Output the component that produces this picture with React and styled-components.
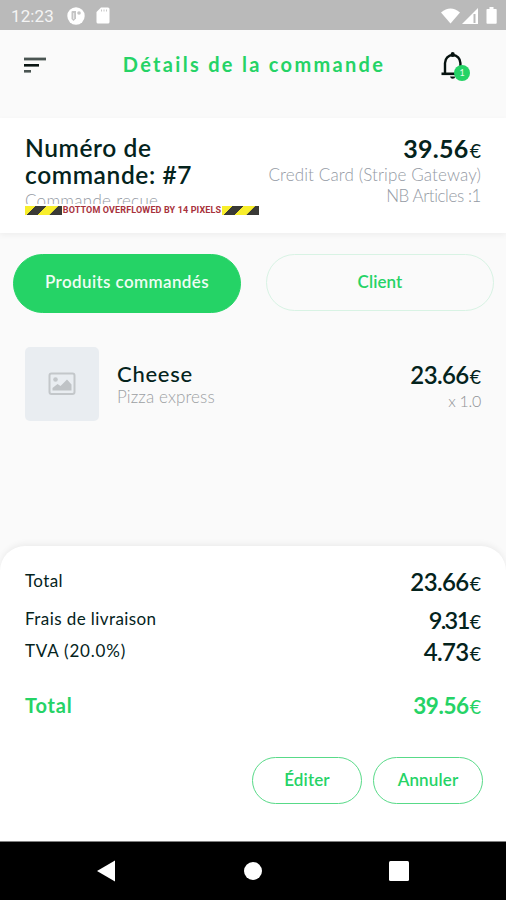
import React from "react";
import styled, { createGlobalStyle } from "styled-components";

const GREEN = "#25d366";
const INK = "#04231c";
const MUTED = "#949aa4";

const GlobalStyle = createGlobalStyle`
  * { box-sizing: border-box; }
  body { margin: 0; background: #fafafa; }
  button { font: inherit; padding: 0; border: 0; background: none; }
`;

const Screen = styled.div`
  width: 506px;
  height: 900px;
  display: flex;
  flex-direction: column;
  overflow: hidden;
  background: #fafafa;
  color: ${INK};
  font-family: Lato, "Liberation Sans", sans-serif;
  white-space: nowrap;
`;

const StatusBar = styled.div`
  flex: 0 0 30px;
  display: flex;
  align-items: center;
  justify-content: space-between;
  padding: 1px 8px 0 11px;
  background: #bababa;
  color: #fff;
`;

const Clock = styled.span`
  width: 56px;
  font: 400 17px/28px Roboto, sans-serif;
  letter-spacing: 0.1px;
  color: #f4f4f4;
`;

const StatusGroup = styled.div`
  display: flex;
  align-items: center;
  gap: ${(p) => p.$gap}px;
  svg { display: block; }
`;

const AppBar = styled.header`
  flex: 0 0 88px;
  display: grid;
  grid-template-columns: 100px 1fr 100px;
  align-items: start;
  padding-top: 19px;
`;

const MenuButton = styled.button`
  height: 31px;
  padding-left: 23px;
  svg { display: block; }
`;

const Title = styled.h1`
  margin: 0;
  padding-left: 2px;
  text-align: center;
  font-size: 20px;
  line-height: 30px;
  font-weight: 700;
  letter-spacing: 2.3px;
  color: ${GREEN};
`;

const BellButton = styled.button`
  position: relative;
  justify-self: start;
  height: 34px;
  margin-left: 34px;
  svg { display: block; }
`;

const BellBadge = styled.span`
  position: absolute;
  left: 14px;
  top: 16px;
  width: 16px;
  height: 16px;
  border-radius: 50%;
  background: ${GREEN};
  color: #e6fbee;
  font-size: 9px;
  line-height: 15px;
  text-align: center;
`;

const OrderCard = styled.section`
  flex: 0 0 115px;
  display: flex;
  justify-content: space-between;
  padding: 16px 25px 0;
  background: #fff;
  box-shadow: 0 2px 6px rgba(0, 0, 0, 0.05);
`;

const OrderHead = styled.div`
  width: 234px;
`;

const OrderClip = styled.div`
  height: 70px;
  overflow: hidden;
`;

const OrderNumber = styled.h2`
  margin: 0;
  font-size: 24.5px;
  line-height: 27px;
  font-weight: 600;
  letter-spacing: 0.6px;
  white-space: normal;
`;

const OrderSide = styled.div`
  display: flex;
  flex-direction: column;
  align-items: flex-end;
`;

const Muted = styled.div`
  font-size: ${(p) => p.$size || 17}px;
  line-height: ${(p) => p.$lh || 21}px;
  font-weight: 300;
  letter-spacing: ${(p) => p.$ls || 0}px;
  color: ${(p) => p.$tone || MUTED};
`;

const OverflowBanner = styled.div`
  display: flex;
  align-items: center;
  justify-content: space-between;
  height: 9px;
  margin-top: 2px;
`;

const HazardStripe = styled.span`
  width: 37px;
  height: 9px;
  background: linear-gradient(
    135deg,
    #f8ee2c 0 7.4px,
    #3a3a36 7.6px 15.3px,
    #f8ee2c 15.5px 23.3px,
    #3a3a36 23.5px
  );
`;

const OverflowText = styled.span`
  font: 700 9px/9px Roboto, sans-serif;
  letter-spacing: 0.14px;
  color: #a8323c;
`;

const Money = styled.div`
  display: flex;
  align-items: baseline;
  justify-content: flex-end;
  gap: 1px;
  font-size: ${(p) => p.$size || 24}px;
  line-height: ${(p) => p.$lh || 30}px;
  font-weight: ${(p) => p.$weight || 600};
  letter-spacing: ${(p) => p.$ls || 0}px;
`;

const Euro = styled.span`
  font-size: 19.5px;
  font-weight: 400;
  letter-spacing: 0;
`;

const Tabs = styled.nav`
  flex: 0 0 80px;
  display: grid;
  grid-template-columns: 228px 228px;
  justify-content: space-between;
  align-items: start;
  padding: 21px 12px 0 13px;
`;

const Tab = styled.button`
  height: ${(p) => (p.$active ? 59 : 57)}px;
  border-radius: 30px;
  border: 1px solid ${(p) => (p.$active ? GREEN : "#d8f3e4")};
  background: ${(p) => (p.$active ? GREEN : "transparent")};
  color: ${(p) => (p.$active ? "#effdf4" : GREEN)};
  font-size: 17px;
  line-height: 22px;
  padding-bottom: ${(p) => (p.$active ? 4 : 2)}px;
  font-weight: 600;
  letter-spacing: ${(p) => (p.$active ? 0.38 : 0.1)}px;
`;

const ProductRow = styled.article`
  display: flex;
  flex: 1;
  align-items: flex-start;
  padding: 34px 25px 0;
`;

const Thumb = styled.div`
  display: flex;
  align-items: center;
  justify-content: center;
  width: 74px;
  height: 74px;
  border-radius: 5px;
  background: #e9edf1;
`;

const ProductText = styled.div`
  flex: 1;
  padding: 14px 0 0 18px;
`;

const ProductName = styled.div`
  font-size: 22px;
  line-height: 25px;
  font-weight: 500;
  letter-spacing: 0.75px;
`;

const ProductSide = styled.div`
  padding-top: 14px;
  text-align: right;
`;

const Summary = styled.section`
  flex: 0 0 295px;
  padding: 20px 25px 0;
  border-radius: 25px 25px 0 0;
  background: #fff;
  box-shadow: 0 -2px 6px rgba(0, 0, 0, 0.06);
`;

const SummaryRow = styled.div`
  display: flex;
  justify-content: space-between;
  align-items: flex-start;
  height: ${(p) => p.$h}px;
  color: ${(p) => (p.$total ? GREEN : INK)};
`;

const SummaryLabel = styled.span`
  font-size: ${(p) => (p.$total ? 20 : 17)}px;
  line-height: 30px;
  font-weight: ${(p) => (p.$total ? 700 : 400)};
  letter-spacing: ${(p) => p.$ls}px;
`;

const SummaryMoney = styled.div`
  padding-top: 1px;
`;

const Actions = styled.div`
  display: flex;
  justify-content: flex-end;
  gap: 11px;
  margin-right: -2px;
`;

const ActionButton = styled.button`
  width: 110px;
  height: 47px;
  border: 1px solid #58da88;
  border-radius: 24px;
  color: ${GREEN};
  font-size: 17px;
  line-height: 22px;
  padding-bottom: 2px;
  font-weight: 600;
  letter-spacing: 0.15px;
`;

const NavBar = styled.footer`
  flex: 0 0 59px;
  display: flex;
  justify-content: space-between;
  align-items: center;
  padding: 0 97px 0 97px;
  background: #000;
  border-top: 1px solid #808080;
  svg { display: block; }
`;

const HomeIcon = styled.svg`
  margin-left: 2px;
`;

function Price({ value, ...rest }) {
  return (
    <Money {...rest}>
      {value}
      <Euro>€</Euro>
    </Money>
  );
}

const rows = [
  { label: "Total", value: "23.66", h: 38, ls: 0.4, priceLs: -0.6 },
  { label: "Frais de livraison", value: "9.31", h: 32, ls: 0.42, priceLs: -1.6, size: 23.5 },
  { label: "TVA (20.0%)", value: "4.73", h: 54, ls: 0.8, priceLs: -0.6 },
  { label: "Total", value: "39.56", h: 67, ls: 0.8, priceLs: -0.4, size: 22.5, total: true },
];

export default function App() {
  return (
    <Screen>
      <GlobalStyle />
      <StatusBar>
        <StatusGroup $gap={0}>
          <Clock>12:23</Clock>
          <StatusGroup $gap={11}>
            <svg width="18" height="18" viewBox="0 0 18 18">
              <circle cx="9" cy="9" r="8.7" fill="#fff" />
              <path d="M4.500 5q0-1 1-1h3.500v7.500l-2.500 2.500-2-2z" fill="#c4c4c4" />
              <path d="M6.700 6v6" stroke="#eee" strokeWidth="1" />
              <circle cx="12" cy="6" r="1.800" fill="#c4c4c4" />
            </svg>
            <svg width="14" height="17" viewBox="0 0 14 17">
              <path d="M5 .5h7q1.500 0 1.500 1.500v13q0 1.500-1.500 1.500H2Q.5 16.500 .5 15V5z" fill="#fff" />
              <path d="M5.500 2.500v2M8 2.500v2M10.500 2.500v2" stroke="#c8c8c8" />
            </svg>
          </StatusGroup>
        </StatusGroup>
        <StatusGroup $gap={2}>
          <svg width="19" height="16" viewBox="0 0 19 16">
            <path d="M0 4.500Q9.500-3.500 19 4.500L9.500 15.500z" fill="#fff" />
          </svg>
          <svg width="16" height="16" viewBox="0 0 16 16">
            <path d="M0 16L16 0v16z" fill="#fff" />
            <path d="M12.500 6v9" stroke="#bababa" strokeWidth="2" />
          </svg>
          <svg width="18" height="17" viewBox="0 0 18 17">
            <path d="M9.500 0h4v2H16q.7 0 .7.800V16q0 .800-.8.800H7.300q-.8 0-.8-.8V2.800Q6.500 2 7.300 2h2.200z" fill="#fff" />
          </svg>
        </StatusGroup>
      </StatusBar>

      <AppBar>
        <MenuButton aria-label="Menu">
          <svg width="24" height="16" viewBox="0 0 24 16">
            <path d="M1 2h22" stroke="#4a5552" strokeWidth="2.800" />
            <path d="M1 8.300h15" stroke="#0a1512" strokeWidth="2.600" />
            <path d="M1 14.300h7" stroke="#4a5552" strokeWidth="2.600" />
          </svg>
        </MenuButton>
        <Title>Détails de la commande</Title>
        <BellButton aria-label="Notifications">
          <svg width="26" height="30" viewBox="0 0 26 30">
            <path d="M5 22.500V12a7.700 8 0 0 1 15.400 0v10.500" fill="none" stroke="#06120f" strokeWidth="2.400" />
            <path d="M1.500 22.800h22.500" stroke="#06120f" strokeWidth="2.600" />
            <path d="M12.700 4V3" stroke="#06120f" strokeWidth="4" strokeLinecap="round" />
            <path d="M10 25.500h5.400q-.5 2.200-2.700 2.200t-2.700-2.200z" fill="#06120f" />
          </svg>
          <BellBadge>1</BellBadge>
        </BellButton>
      </AppBar>

      <OrderCard>
        <OrderHead>
          <OrderClip>
            <OrderNumber>Numéro de commande: #7</OrderNumber>
            <Muted $lh={25} $ls={0.28}>Commande reçue</Muted>
          </OrderClip>
          <OverflowBanner>
            <HazardStripe />
            <OverflowText>BOTTOM OVERFLOWED BY 14 PIXELS</OverflowText>
            <HazardStripe />
          </OverflowBanner>
        </OrderHead>
        <OrderSide>
          <Price value="39.56" $size={25} $weight={700} $lh={29} $ls={0.3} />
          <Muted $lh={20} $ls={0.13}>Credit Card (Stripe Gateway)</Muted>
          <Muted $lh={22} $ls={-0.42}>NB Articles :1</Muted>
        </OrderSide>
      </OrderCard>

      <Tabs>
        <Tab $active>Produits commandés</Tab>
        <Tab>Client</Tab>
      </Tabs>

      <ProductRow>
        <Thumb>
          <svg width="28" height="24" viewBox="0 0 28 24">
            <rect x="1.500" y="1.500" width="25" height="20.500" rx="2" fill="none" stroke="#c3c7ca" strokeWidth="2" />
            <circle cx="7.500" cy="7.500" r="2.300" fill="#c3c7ca" />
            <path d="M4.500 18.500v-2.500l5-4 3 2 6.500-6.500 4.500 5v6z" fill="#bfc3c6" />
          </svg>
        </Thumb>
        <ProductText>
          <ProductName>Cheese</ProductName>
          <Muted $ls={0.1} $tone="#9c9fa3">Pizza express</Muted>
        </ProductText>
        <ProductSide>
          <Price value="23.66" $ls={-0.6} $lh={28} />
          <Muted $size={16} $lh={19} $ls={-0.3} $tone="#8f9296">x 1.0</Muted>
        </ProductSide>
      </ProductRow>

      <Summary>
        {rows.map((r, i) => (
          <SummaryRow key={i} $h={r.h} $total={r.total}>
            <SummaryLabel $ls={r.ls} $total={r.total}>{r.label}</SummaryLabel>
            <SummaryMoney>
              <Price value={r.value} $ls={r.priceLs} $size={r.size} $weight={r.total ? 700 : 600} />
            </SummaryMoney>
          </SummaryRow>
        ))}
        <Actions>
          <ActionButton>Éditer</ActionButton>
          <ActionButton>Annuler</ActionButton>
        </Actions>
      </Summary>

      <NavBar>
        <svg width="18" height="22" viewBox="0 0 18 22">
          <path d="M0 11L18 .5v21z" fill="#fff" />
        </svg>
        <HomeIcon width="18" height="18" viewBox="0 0 18 18">
          <circle cx="9" cy="9" r="9" fill="#fff" />
        </HomeIcon>
        <svg width="20" height="20" viewBox="0 0 20 20">
          <rect width="20" height="20" rx="1.500" fill="#fff" />
        </svg>
      </NavBar>
    </Screen>
  );
}
